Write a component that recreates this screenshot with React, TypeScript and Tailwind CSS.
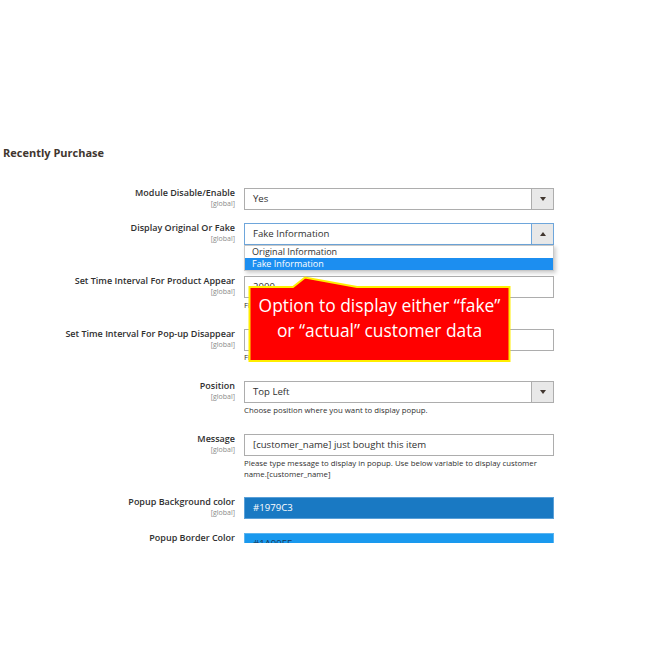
import type { ReactNode } from "react";

function Arrow({ up }: { up?: boolean }) {
  return up ? (
    <span className="block w-0 h-0 border-x-[3px] border-x-transparent border-b-[4px] border-b-[#41362f]"></span>
  ) : (
    <span className="block w-0 h-0 border-x-[3px] border-x-transparent border-t-[4px] border-t-[#41362f]"></span>
  );
}

function Select({ value, focused }: { value: string; focused?: boolean }) {
  return (
    <div
      className={`relative h-[22px] flex items-center bg-white border ${
        focused ? "border-[#6ea6db]" : "border-[#adadad]"
      }`}
    >
      <span className="pl-[8px] text-[9.6px] text-[#303030]">{value}</span>
      <div
        className={`absolute right-0 top-0 bottom-0 w-[22px] flex items-center justify-center bg-[#e8e8e8] border-l ${
          focused ? "border-[#6ea6db]" : "border-[#adadad]"
        }`}
      >
        <Arrow up={focused} />
      </div>
    </div>
  );
}

function Input({ value, className = "" }: { value: string; className?: string }) {
  return (
    <div className={`h-[22px] flex items-center border border-[#adadad] bg-white ${className}`}>
      <span className="pl-[8px] text-[9.6px] text-[#303030]">{value}</span>
    </div>
  );
}

function Note({ children, className = "mt-[2px]" }: { children: ReactNode; className?: string }) {
  return <p className={`text-[7.8px] leading-[11px] text-[#303030] ${className}`}>{children}</p>;
}

function Row({
  label,
  scope = true,
  className = "",
  children,
}: {
  label: string;
  scope?: boolean;
  className?: string;
  children: ReactNode;
}) {
  return (
    <div className={`flex items-start ${className}`}>
      <div className="w-[235px] -mt-[1px] text-right">
        <div className="text-[9px] leading-[12px] font-semibold text-[#303030]">{label}</div>
        {scope && <div className="text-[7px] leading-[9px] text-[#8a8a8a]">[global]</div>}
      </div>
      <div className="ml-[9px] w-[310px] relative">{children}</div>
    </div>
  );
}

export default function App() {
  return (
    <div className="w-[670px] h-[670px] bg-white relative" style={{ fontFamily: "'Open Sans', sans-serif" }}>
      <div className="h-[543px] overflow-hidden pt-[146px]">
        <h1 className="pl-[3px] text-[11px] leading-[14px] font-bold text-[#41362f]">Recently Purchase</h1>

        <Row label="Module Disable/Enable" className="mt-[28px]">
          <Select value="Yes" />
        </Row>

        <Row label="Display Original Or Fake" className="mt-[13px]">
          <Select value="Fake Information" focused />
          <div className="absolute left-0 right-0 top-full z-10 bg-white border border-[#c8c8c8] shadow-[2px_2px_4px_rgba(0,0,0,0.2)]">
            <div className="h-[12px] pl-[7px] text-[9px] leading-[12px] text-[#303030]">Original Information</div>
            <div className="h-[12px] pl-[7px] text-[9px] leading-[12px] text-white bg-[#1c8ef0]">Fake Information</div>
          </div>
        </Row>

        <Row label="Set Time Interval For Product Appear" className="mt-[31px]">
          <Input value="2000" />
          <Note>Fill time in milliseconds.</Note>
        </Row>

        <Row label="Set Time Interval For Pop-up Disappear" className="mt-[18px]">
          <Input value="5000" />
          <Note className="mt-[1px]">Fill time in milliseconds.</Note>
        </Row>

        <Row label="Position" className="mt-[18px]">
          <Select value="Top Left" />
          <Note>Choose position where you want to display popup.</Note>
        </Row>

        <Row label="Message" className="mt-[18px]">
          <Input value="[customer_name] just bought this item" />
          <Note>
            Please type message to display in popup. Use below variable to display customer
            <br />
            name.[customer_name]
          </Note>
        </Row>

        <Row label="Popup Background color" className="mt-[17px]">
          <div className="h-[22px] flex items-center bg-[#1979c3] border border-[#5aa0d8]">
            <span className="pl-[8px] text-[9.6px] text-white">#1979C3</span>
          </div>
        </Row>

        <Row label="Popup Border Color" className="mt-[14px]">
          <div className="h-[22px] flex items-center bg-[#1a99ee] border border-[#5ab4f0]">
            <span className="pl-[8px] text-[9.6px] text-[#1b3a57]">#1A99EE</span>
          </div>
        </Row>
      </div>

      {/* callout */}
      <div className="absolute left-[248px] top-[276px] w-[263px] h-[87px] z-20">
        <svg width="263" height="87" viewBox="0 0 263 87" className="absolute inset-0">
          <polygon
            points="1.5,11 45,11 57,1.5 109,11 261.5,11 261.5,85 1.5,85"
            fill="#ff0000"
            stroke="#ffee00"
            strokeWidth="2"
          />
        </svg>
        <div className="absolute left-0 right-0 top-[17px] text-center text-white text-[17.4px] leading-[25px]">
          Option to display either “fake”
          <br />
          or “actual” customer data
        </div>
      </div>
    </div>
  );
}
